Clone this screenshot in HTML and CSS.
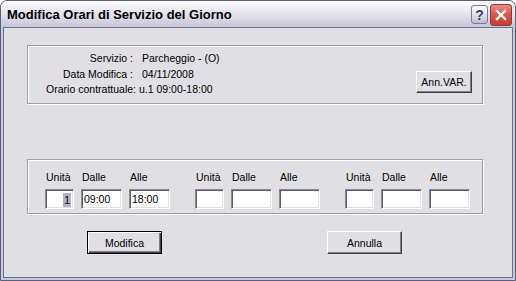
FILE: index.html
```html
<!doctype html>
<html lang="it">
<head>
  <meta charset="UTF-8">
  <title>Modifica Orari di Servizio del Giorno</title>
  <link rel="stylesheet" href="styles.css">
</head>
<body>
  <div class="window">
    <div class="titlebar">
      <span class="title">Modifica Orari di Servizio del Giorno</span>
      <span class="caption-btn help">?</span>
      <span class="caption-btn close">
        <svg viewBox="0 0 22 22" width="22" height="22">
          <path d="M6.5 6.5 L15.5 15.5 M15.5 6.5 L6.5 15.5" stroke="#fff" stroke-width="2.4" stroke-linecap="square"/>
        </svg>
      </span>
    </div>
    <div class="client">
      <div class="group info">
        <div class="fields">
          <div class="row"><span class="lbl">Servizio :</span><span class="val">Parcheggio - (O)</span></div>
          <div class="row"><span class="lbl">Data Modifica :</span><span class="val">04/11/2008</span></div>
          <div class="row wide"><span class="lbl">Orario contrattuale:</span><span class="val">u.1 09:00-18:00</span></div>
        </div>
        <button class="btn ann">Ann.VAR.</button>
      </div>
      <div class="group times">
        <div class="slot">
          <span class="cap">Unità</span><span class="cap">Dalle</span><span class="cap">Alle</span>
          <div class="field unit"><span class="sel">1</span></div>
          <div class="field">09:00</div>
          <div class="field">18:00</div>
        </div>
        <div class="slot">
          <span class="cap">Unità</span><span class="cap">Dalle</span><span class="cap">Alle</span>
          <div class="field unit"></div>
          <div class="field"></div>
          <div class="field"></div>
        </div>
        <div class="slot">
          <span class="cap">Unità</span><span class="cap">Dalle</span><span class="cap">Alle</span>
          <div class="field unit"></div>
          <div class="field"></div>
          <div class="field"></div>
        </div>
      </div>
      <div class="actions">
        <button class="btn default">Modifica</button>
        <button class="btn cancel">Annulla</button>
      </div>
    </div>
  </div>
</body>
</html>
```

FILE: styles.css
```css
* {
  box-sizing: border-box;
}
body {
  margin: 0;
  background: #fff;
  font: 10.5px "Liberation Sans", Arial, sans-serif;
  color: #000;
}
.window {
  display: flex;
  flex-direction: column;
  width: 516px;
  height: 281px;
  padding: 0 2px 2px;
  border: 1px solid #5d5d7c;
  border-radius: 7px 7px 0 0;
  background: #c9c8d8;
  overflow: hidden;
}
.titlebar {
  display: flex;
  align-items: center;
  height: 26px;
  margin: 0 -2px;
  padding: 1px 3px 0 6px;
  background: linear-gradient(#fefeff, #efeff4 25%, #dedde8 60%, #c6c6d6);
}
.title {
  flex: 1;
  font: bold 13px "Liberation Sans", Arial, sans-serif;
}
.caption-btn {
  display: flex;
  align-items: center;
  justify-content: center;
  border-radius: 3px;
}
.caption-btn.help {
  width: 17px;
  height: 19px;
  margin-right: 2px;
  border: 1px solid #7b7b99;
  background: linear-gradient(#fbfbfd, #dcdce8 60%, #babacc);
  color: #3b3b60;
  font: bold 14px "Liberation Sans", Arial, sans-serif;
}
.caption-btn.close {
  width: 22px;
  height: 22px;
  border: 1px solid #8c3a33;
  background: linear-gradient(#ec8a7f, #d9574b 50%, #c33d30);
}
.client {
  flex: 1;
  border: 1px solid #6f6f8e;
  background: #e0dfe3;
}
.group {
  width: 456px;
  margin-left: 23px;
  border: 1px solid #a0a0a0;
  box-shadow: inset 1px 1px 0 #fff, 1px 1px 0 #fff;
}
.info {
  display: flex;
  height: 59px;
  margin-top: 17px;
  padding-top: 5px;
}
.fields {
  flex: 1;
  line-height: 15.5px;
}
.row {
  display: flex;
}
.lbl {
  width: 105px;
  text-align: right;
  white-space: nowrap;
}
.val {
  margin-left: 9px;
}
.row.wide .lbl {
  width: 108px;
}
.row.wide .val {
  margin-left: 3px;
}
.btn {
  width: 75px;
  height: 23px;
  padding: 0;
  border: 1px solid;
  border-color: #fff #404040 #404040 #fff;
  box-shadow: inset -1px -1px 0 #808080;
  background: #e0dfe3;
  font: 10.5px "Liberation Sans", Arial, sans-serif;
  color: #000;
}
.btn.ann {
  width: 56px;
  height: 22px;
  margin: 20px 10px 0 0;
}
.btn.default {
  border-color: #000;
  box-shadow: inset 1px 1px 0 #fff, inset -1px -1px 0 #404040, inset -2px -2px 0 #808080;
}
.times {
  display: flex;
  gap: 25px;
  height: 55px;
  margin-top: 55px;
  padding: 10px 0 0 17px;
}
.slot {
  display: grid;
  grid-template-columns: 29px 41px 41px;
  column-gap: 7px;
}
.cap {
  padding-left: 1px;
  line-height: 15px;
}
.field {
  height: 20px;
  padding: 0 2px;
  border: 1px solid;
  border-color: #8a8a8a #fff #fff #8a8a8a;
  box-shadow: inset 1px 1px 0 #606060, inset -1px -1px 0 #e0dfe3;
  background: #fff;
  line-height: 18px;
}
.field.unit {
  text-align: right;
}
.sel {
  display: inline-block;
  padding: 0 1px;
  line-height: 14px;
  vertical-align: middle;
  background: #b3b2c5;
}
.actions {
  display: flex;
  margin-top: 17px;
  padding-left: 83px;
}
.btn.cancel {
  margin-left: 165px;
}
```
